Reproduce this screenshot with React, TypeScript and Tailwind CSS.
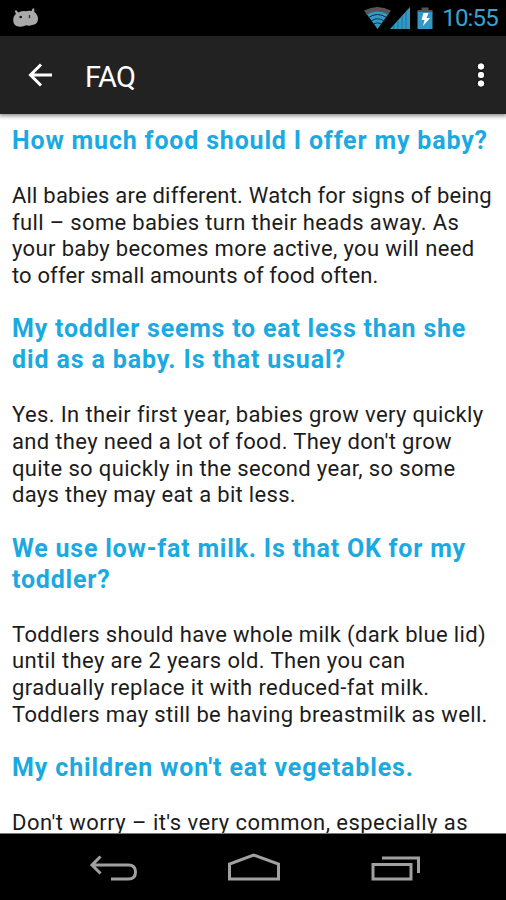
interface Line {
    text: string;
    spacing: string;
}

interface FaqEntry {
    question: Line[];
    answer: Line[];
}

const faqs: FaqEntry[] = [
    {
        question: [{ text: "How much food should I offer my baby?", spacing: "tracking-[0.82px]" }],
        answer: [
            { text: "All babies are different. Watch for signs of being", spacing: "tracking-[0.21px]" },
            { text: "full – some babies turn their heads away. As", spacing: "tracking-[0.35px]" },
            { text: "your baby becomes more active, you will need", spacing: "tracking-[0.36px]" },
            { text: "to offer small amounts of food often.", spacing: "tracking-[0.14px]" },
        ],
    },
    {
        question: [
            { text: "My toddler seems to eat less than she", spacing: "tracking-[0.77px]" },
            { text: "did as a baby. Is that usual?", spacing: "tracking-[0.86px]" },
        ],
        answer: [
            { text: "Yes. In their first year, babies grow very quickly", spacing: "tracking-[0.38px]" },
            { text: "and they need a lot of food. They don't grow", spacing: "tracking-[0.33px]" },
            { text: "quite so quickly in the second year, so some", spacing: "tracking-[0.35px]" },
            { text: "days they may eat a bit less.", spacing: "tracking-[0.32px]" },
        ],
    },
    {
        question: [
            { text: "We use low-fat milk. Is that OK for my", spacing: "tracking-[0.78px]" },
            { text: "toddler?", spacing: "tracking-[0.8px]" },
        ],
        answer: [
            { text: "Toddlers should have whole milk (dark blue lid)", spacing: "tracking-[0.35px]" },
            { text: "until they are 2 years old. Then you can", spacing: "tracking-[0.38px]" },
            { text: "gradually replace it with reduced-fat milk.", spacing: "tracking-[0.39px]" },
            { text: "Toddlers may still be having breastmilk as well.", spacing: "tracking-[0.35px]" },
        ],
    },
    {
        question: [{ text: "My children won't eat vegetables.", spacing: "tracking-[0.87px]" }],
        answer: [{ text: "Don't worry – it's very common, especially as", spacing: "tracking-[0.46px]" }],
    },
];

const StatusBar = () => (
    <div className="flex h-9 shrink-0 items-center justify-between bg-black pl-3 pr-2">
        <svg width="28" height="20" viewBox="0 0 28 20" fill="#a9a9a9">
            <path d="M2.6 3 L4.2 2.2 L6.5 4.5 Q10 2.8 13.5 3.2 Q17 2.6 19.5 3 L20.6 0.4 L22.2 0.6 L22.4 4 Q26.3 7 26 11.5 Q25.4 16.8 20 17 Q17.5 18.3 14 17.3 Q11 19.3 6.5 18.6 Q1.6 18 1.2 12.5 Q1 8.5 4 5.8 Z" />
            <circle cx="8.7" cy="9" r="1.3" fill="#111" />
            <path d="M16.8 7h1.4v3.2h-1.4z" fill="#333" />
        </svg>
        <div className="flex items-center">
            <svg width="70" height="24" viewBox="0 0 70 24">
                <path d="M0 4.5 Q13.5 -2.5 27 4.5 L24 9 Q13.5 3.5 3 9Z" fill="#555" />
                <path d="M3 8.5 Q13.5 2.5 24 8.5 L13.5 23Z" fill="#3399c4" />
                <path d="M4.5 11.5 Q13.5 5.5 22.5 11.5 M7 15 Q13.5 10.5 20 15 M9.5 18 Q13.5 15.5 17.5 18" fill="none" stroke="#063346" />
                <path d="M46 1V23H26Z" fill="#3399c4" />
                <path d="M30 19V23M34 14.5V23M38 10V23M42 6V23" stroke="#1f7398" />
                <path d="M53.5 4h4V1.5h7V4h4v3h-15Z" fill="#555" />
                <path d="M53.5 6h15v17h-15Z" fill="#3399c4" />
                <path d="M59.5 7h5l-2 5h3.5l-7 8 1.5-6h-3Z" fill="#fff" />
            </svg>
            <span className="ml-2 text-[24px] leading-9 tracking-[-0.8px] text-[#36a3d0]">10:55</span>
        </div>
    </div>
);

const ActionBar = () => (
    <div className="relative z-10 flex h-[78px] shrink-0 items-center justify-between bg-[#222] pl-7 pr-[18px] shadow-[0_1px_4px_1px_rgba(0,0,0,0.45)]">
        <div className="flex items-center">
            <svg width="25" height="24" viewBox="0 0 25 24" fill="none" stroke="#fff" strokeWidth="3">
                <path d="M13 1.5 L2.5 12 L13 22.5 M2.5 12 H24" />
            </svg>
            <h1 className="ml-8 pt-[3px] text-[29px] leading-8 tracking-[-0.7px] text-white">FAQ</h1>
        </div>
        <svg width="14" height="26" viewBox="0 0 14 26" fill="#fff" stroke="#000">
            <circle cx="7" cy="4.5" r="3.8" />
            <circle cx="7" cy="13" r="3.8" />
            <circle cx="7" cy="21.5" r="3.8" />
        </svg>
    </div>
);

const FaqItem = ({ question, answer }: FaqEntry) => (
    <section className="mb-[24.7px]">
        <h2 className="mb-[26.2px] text-[25px] font-bold leading-[30.8px] text-[#1ba9e1]">
            {question.map(({ text, spacing }) => (
                <span key={text} className={`block whitespace-nowrap ${spacing}`}>{text}</span>
            ))}
        </h2>
        <p className="text-[22px] leading-[26.7px] text-[#1c1c1c]">
            {answer.map(({ text, spacing }) => (
                <span key={text} className={`block whitespace-nowrap ${spacing}`}>{text}</span>
            ))}
        </p>
    </section>
);

const NavBar = () => (
    <div className="flex h-[67px] shrink-0 items-center justify-center border-t border-[#777] bg-black pt-1">
        <svg width="336" height="34" viewBox="0 0 336 34" fill="none" stroke="#a0a0a0" strokeWidth="3">
            <path d="M15.5 4.5 L7 13 L15.5 21.5 M7 13 H43.5 Q50.5 13 50.5 20 Q50.5 27 43.5 27 H26" />
            <path d="M144.5 27 V12 L168.5 3 L193.5 12 V27 Z" />
            <path d="M288 12.5 H326 V27 H288 Z" />
            <path d="M297 6 H333.5 V21" />
        </svg>
    </div>
);

const App = () => {
    return (
        <div className="flex h-[900px] w-[506px] flex-col overflow-hidden bg-white font-['Roboto',sans-serif]">
            <StatusBar />
            <ActionBar />
            <main className="min-h-0 flex-1 overflow-hidden pl-3 pt-3">
                {faqs.map((faq) => (
                    <FaqItem key={faq.question[0].text} {...faq} />
                ))}
            </main>
            <NavBar />
        </div>
    );
};

export default App;
